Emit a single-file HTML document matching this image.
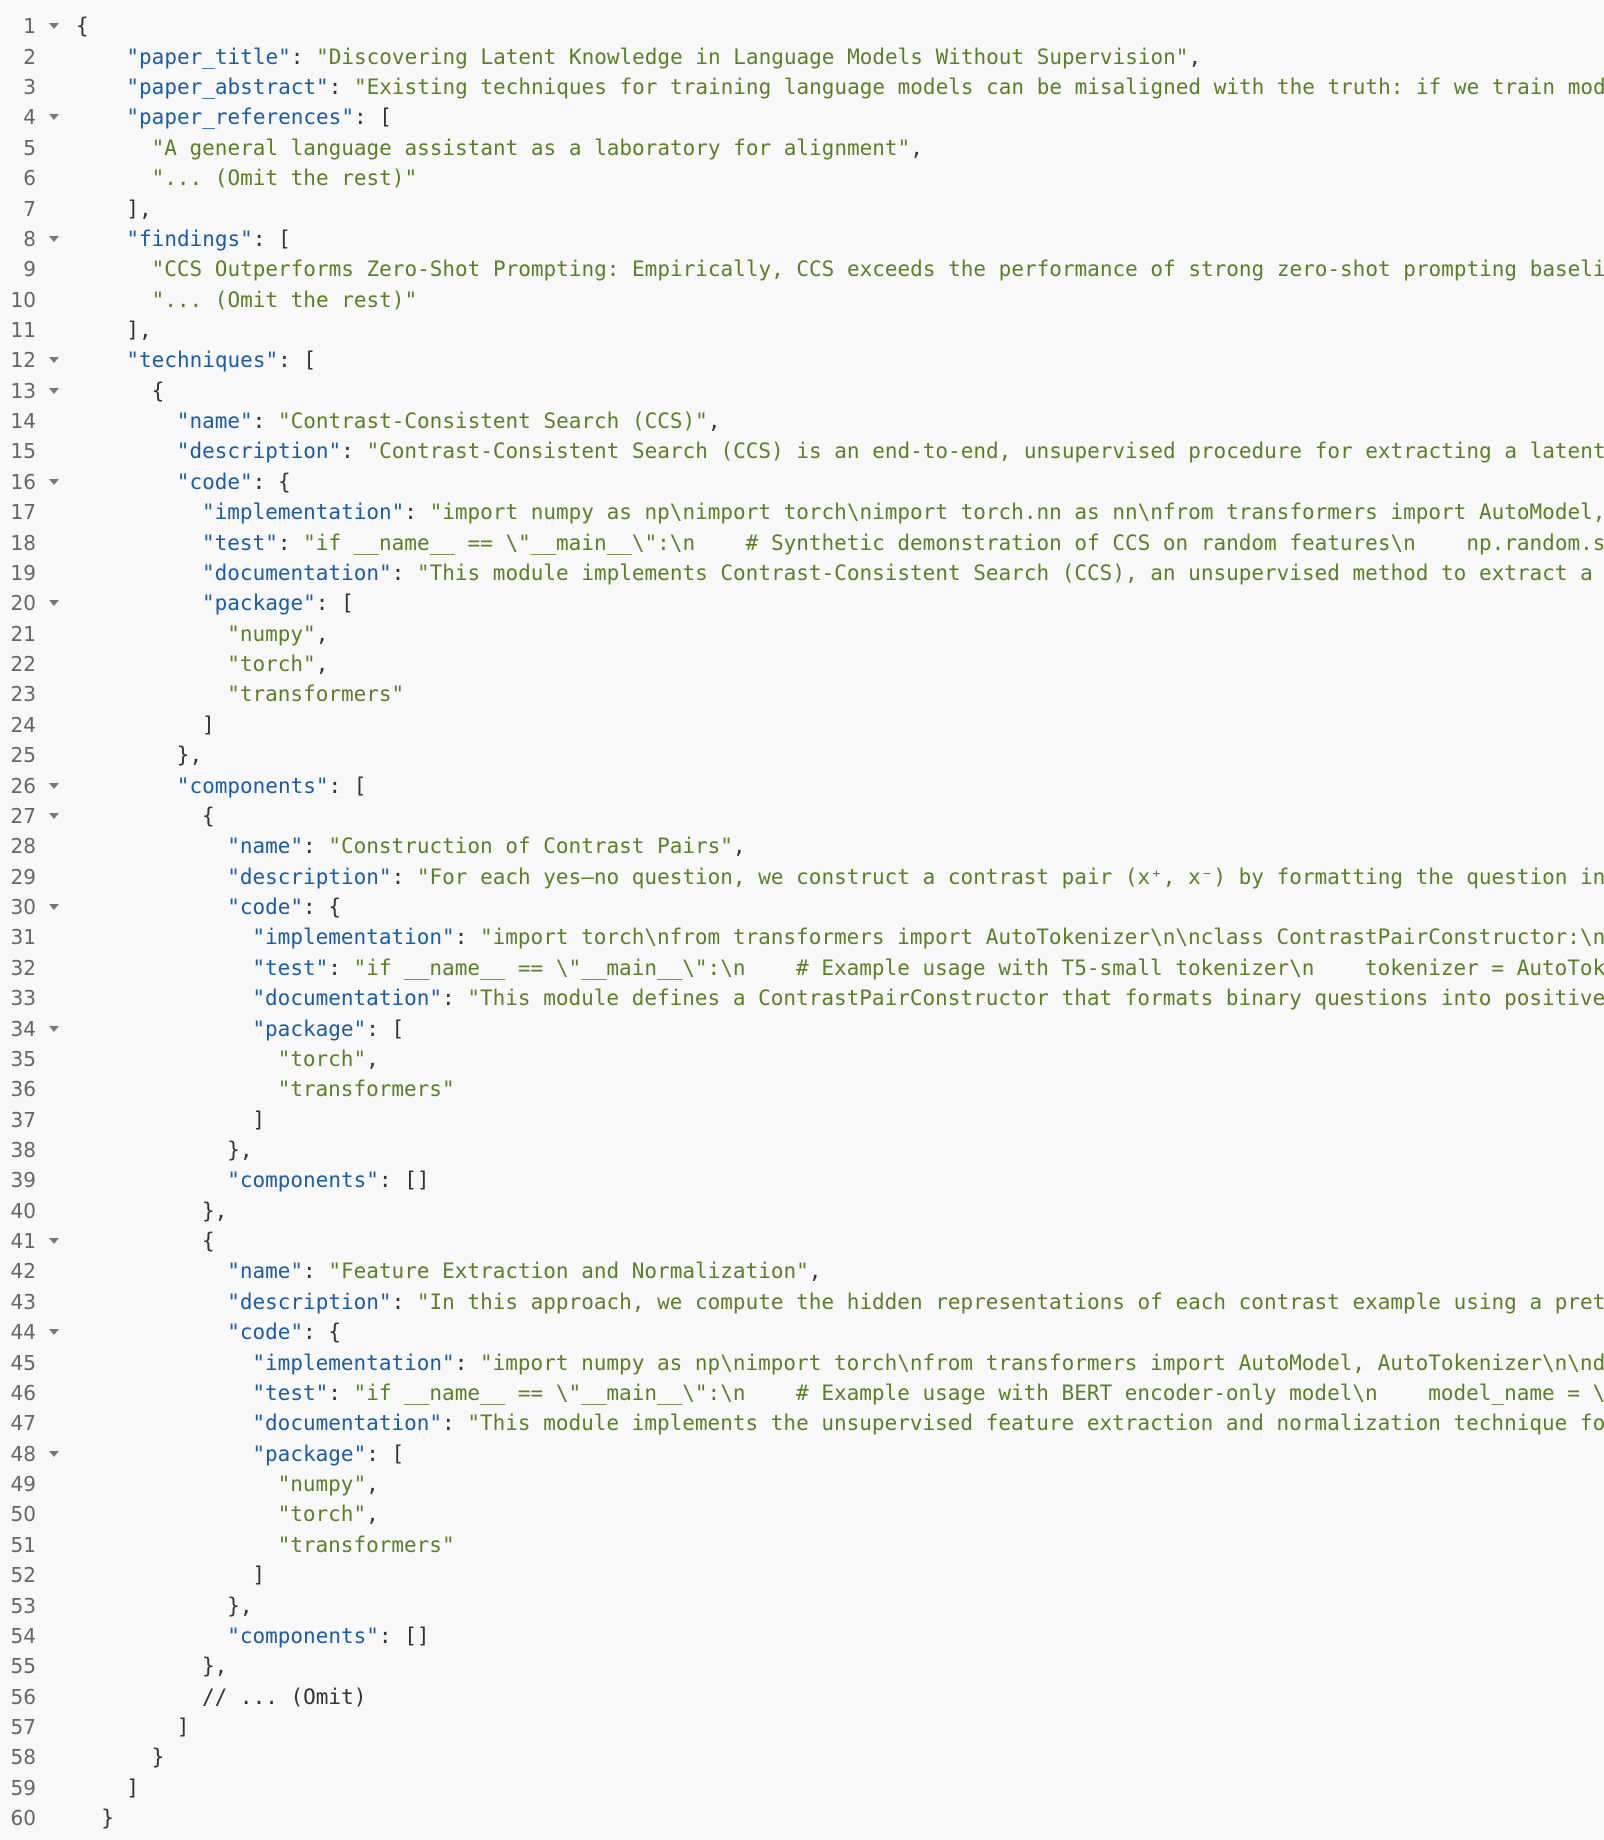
<!DOCTYPE html>
<html><head><meta charset="utf-8"><style>
html,body{margin:0;padding:0;background:#f8f8f8;width:1604px;height:1840px;overflow:hidden}
.l{position:absolute;left:0;height:30.36px;line-height:30.36px;white-space:pre;font-family:"DejaVu Sans Mono","Liberation Mono",monospace;font-size:21px;color:#333;width:1604px;overflow:hidden}
.n{position:absolute;left:0;width:36px;text-align:right;color:#666;font-family:"DejaVu Sans","Liberation Sans",sans-serif;font-size:20px}
.a{position:absolute;left:49px;top:12px;width:0;height:0;border-left:5px solid transparent;border-right:5px solid transparent;border-top:6px solid #777}
.c{position:absolute;left:76px}
.k{color:#1c5ba5}.s{color:#5b7f28}
</style></head><body>
<div id="w"></div>
<script>
var L=[
[0,1,'{'],
[4,0,'<span class=k>"paper_title"</span>: <span class=s>"Discovering Latent Knowledge in Language Models Without Supervision"</span>,'],
[4,0,'<span class=k>"paper_abstract"</span>: <span class=s>"Existing techniques for training language models can be misaligned with the truth: if we train models with imitation learning"</span>,'],
[4,1,'<span class=k>"paper_references"</span>: ['],
[6,0,'<span class=s>"A general language assistant as a laboratory for alignment"</span>,'],
[6,0,'<span class=s>"... (Omit the rest)"</span>'],
[4,0,'],'],
[4,1,'<span class=k>"findings"</span>: ['],
[6,0,'<span class=s>"CCS Outperforms Zero-Shot Prompting: Empirically, CCS exceeds the performance of strong zero-shot prompting baselines"</span>,'],
[6,0,'<span class=s>"... (Omit the rest)"</span>'],
[4,0,'],'],
[4,1,'<span class=k>"techniques"</span>: ['],
[6,1,'{'],
[8,0,'<span class=k>"name"</span>: <span class=s>"Contrast-Consistent Search (CCS)"</span>,'],
[8,0,'<span class=k>"description"</span>: <span class=s>"Contrast-Consistent Search (CCS) is an end-to-end, unsupervised procedure for extracting a latent knowledge"</span>,'],
[8,1,'<span class=k>"code"</span>: {'],
[10,0,'<span class=k>"implementation"</span>: <span class=s>"import numpy as np\\nimport torch\\nimport torch.nn as nn\\nfrom transformers import AutoModel, AutoTokenizer"</span>,'],
[10,0,'<span class=k>"test"</span>: <span class=s>"if __name__ == \\"__main__\\":\\n    # Synthetic demonstration of CCS on random features\\n    np.random.seed(0)"</span>,'],
[10,0,'<span class=k>"documentation"</span>: <span class=s>"This module implements Contrast-Consistent Search (CCS), an unsupervised method to extract a latent"</span>,'],
[10,1,'<span class=k>"package"</span>: ['],
[12,0,'<span class=s>"numpy"</span>,'],
[12,0,'<span class=s>"torch"</span>,'],
[12,0,'<span class=s>"transformers"</span>'],
[10,0,']'],
[8,0,'},'],
[8,1,'<span class=k>"components"</span>: ['],
[10,1,'{'],
[12,0,'<span class=k>"name"</span>: <span class=s>"Construction of Contrast Pairs"</span>,'],
[12,0,'<span class=k>"description"</span>: <span class=s>"For each yes—no question, we construct a contrast pair (x⁺, x⁻) by formatting the question into"</span>,'],
[12,1,'<span class=k>"code"</span>: {'],
[14,0,'<span class=k>"implementation"</span>: <span class=s>"import torch\\nfrom transformers import AutoTokenizer\\n\\nclass ContrastPairConstructor:\\n    def"</span>,'],
[14,0,'<span class=k>"test"</span>: <span class=s>"if __name__ == \\"__main__\\":\\n    # Example usage with T5-small tokenizer\\n    tokenizer = AutoTokenizer"</span>,'],
[14,0,'<span class=k>"documentation"</span>: <span class=s>"This module defines a ContrastPairConstructor that formats binary questions into positive and"</span>,'],
[14,1,'<span class=k>"package"</span>: ['],
[16,0,'<span class=s>"torch"</span>,'],
[16,0,'<span class=s>"transformers"</span>'],
[14,0,']'],
[12,0,'},'],
[12,0,'<span class=k>"components"</span>: []'],
[10,0,'},'],
[10,1,'{'],
[12,0,'<span class=k>"name"</span>: <span class=s>"Feature Extraction and Normalization"</span>,'],
[12,0,'<span class=k>"description"</span>: <span class=s>"In this approach, we compute the hidden representations of each contrast example using a pretrained"</span>,'],
[12,1,'<span class=k>"code"</span>: {'],
[14,0,'<span class=k>"implementation"</span>: <span class=s>"import numpy as np\\nimport torch\\nfrom transformers import AutoModel, AutoTokenizer\\n\\ndef"</span>,'],
[14,0,'<span class=k>"test"</span>: <span class=s>"if __name__ == \\"__main__\\":\\n    # Example usage with BERT encoder-only model\\n    model_name = \\"bert"</span>,'],
[14,0,'<span class=k>"documentation"</span>: <span class=s>"This module implements the unsupervised feature extraction and normalization technique for"</span>,'],
[14,1,'<span class=k>"package"</span>: ['],
[16,0,'<span class=s>"numpy"</span>,'],
[16,0,'<span class=s>"torch"</span>,'],
[16,0,'<span class=s>"transformers"</span>'],
[14,0,']'],
[12,0,'},'],
[12,0,'<span class=k>"components"</span>: []'],
[10,0,'},'],
[10,0,'// ... (Omit)'],
[8,0,']'],
[6,0,'}'],
[4,0,']'],
[2,0,'}']
];
var h='';
for(var i=0;i<L.length;i++){
 var t=11.3+i*30.37;
 h+='<div class="l" style="top:'+t.toFixed(2)+'px"><span class="n">'+(i+1)+'</span>'+(L[i][1]?'<span class="a"></span>':'')+'<span class="c" style="left:'+(76+L[i][0]*12.6).toFixed(2)+'px">'+L[i][2]+'</span></div>';
}
document.getElementById('w').innerHTML=h;
</script>
</body></html>
